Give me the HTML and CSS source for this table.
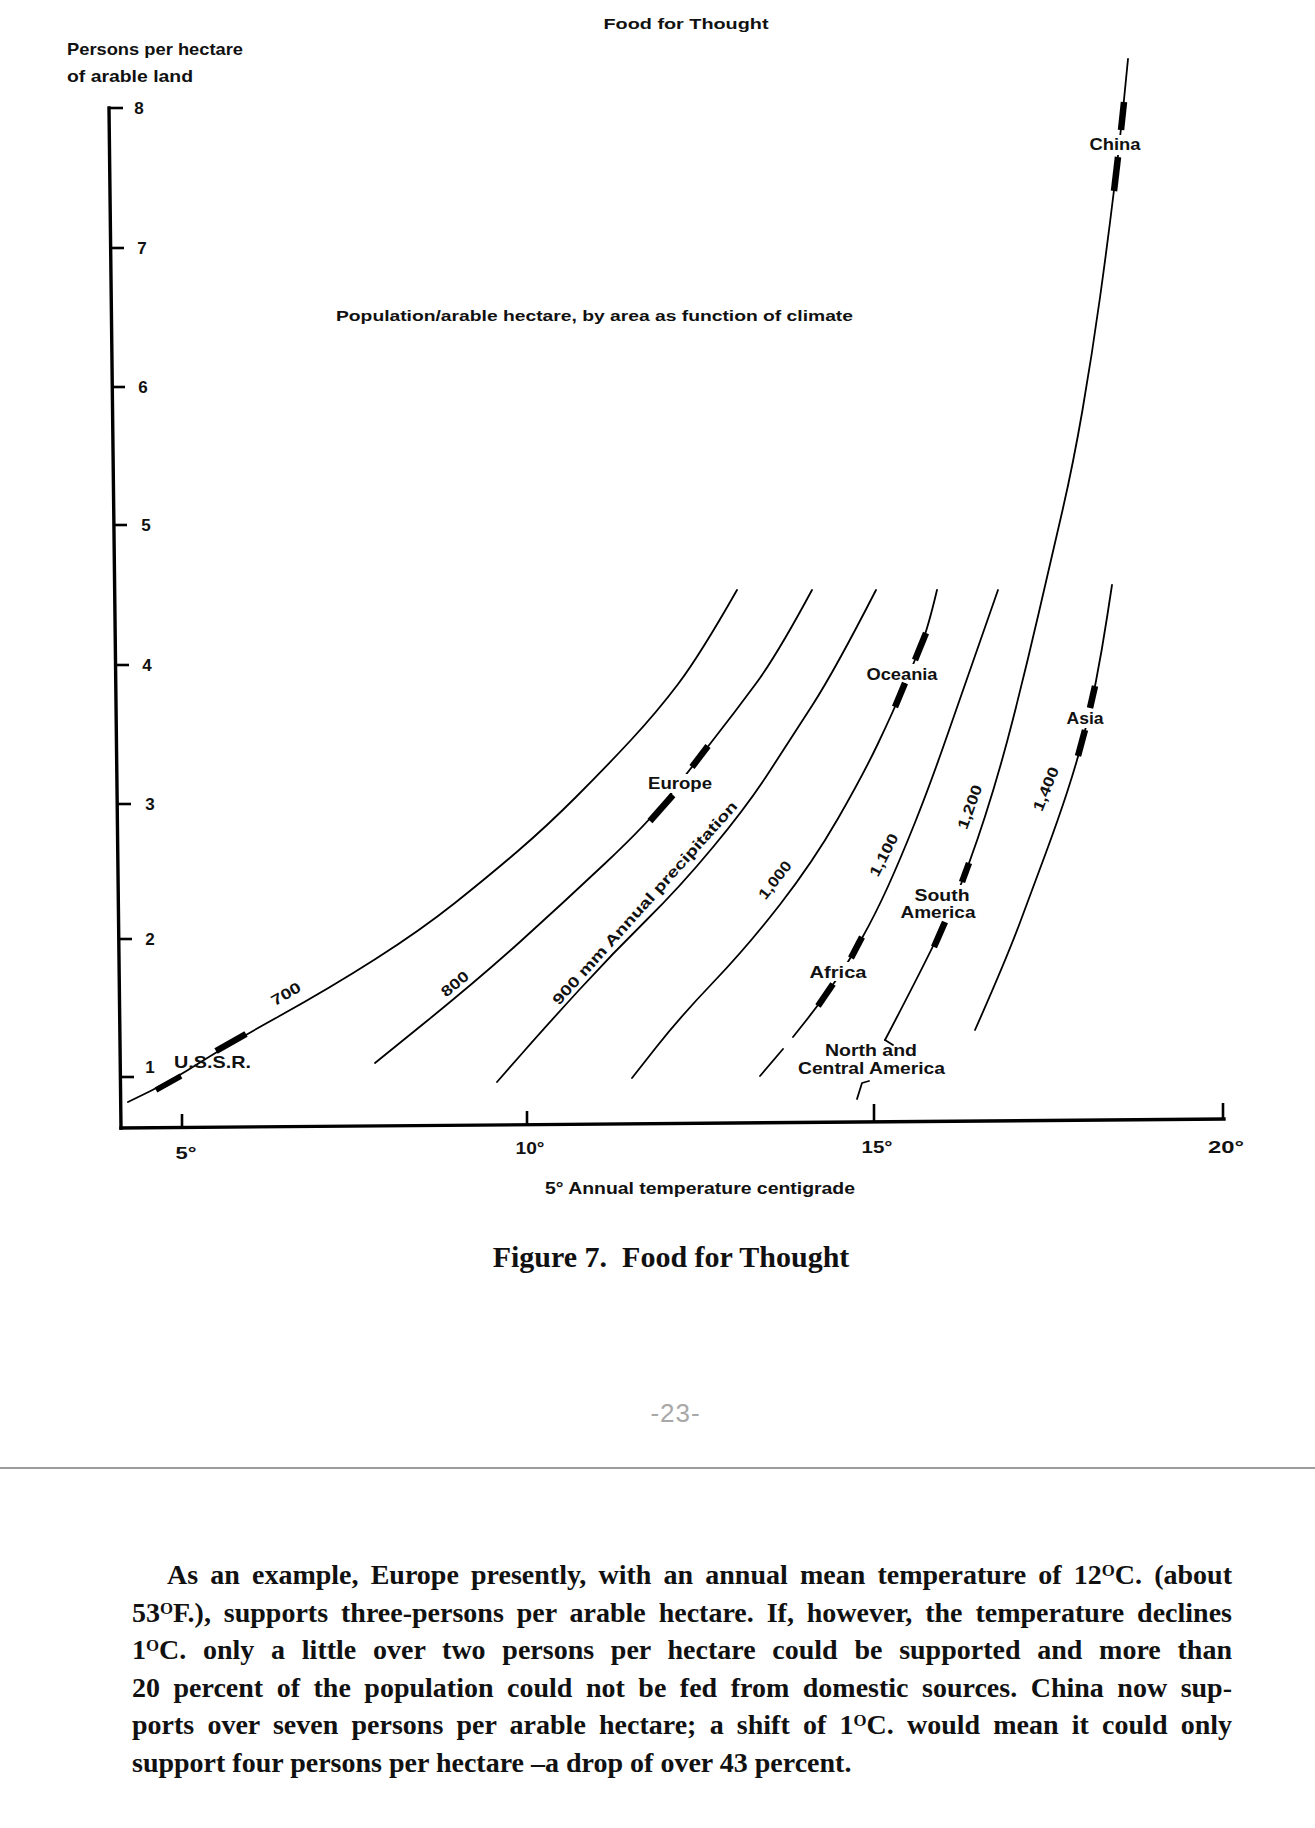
FILE: index.html
```html
<!DOCTYPE html>
<html lang="en">
<head>
<meta charset="utf-8">
<title>Figure 7. Food for Thought</title>
<link rel="stylesheet" href="styles.css">
</head>
<body>
<main class="page">
  <svg class="chart" xmlns="http://www.w3.org/2000/svg" width="1315" height="1239" viewBox="0 0 1315 1239">
    <!-- axes -->
    <line class="axis" x1="109" y1="108" x2="121" y2="1128"/>
    <line class="axis" x1="121" y1="1128" x2="1224" y2="1119"/>
    <line class="tick" x1="109" y1="108" x2="123" y2="108"/>
    <line class="tick" x1="110.5" y1="248" x2="124" y2="248"/>
    <line class="tick" x1="112" y1="387" x2="125" y2="387"/>
    <line class="tick" x1="113.5" y1="525" x2="127" y2="525"/>
    <line class="tick" x1="115.5" y1="665" x2="129" y2="665"/>
    <line class="tick" x1="117" y1="804" x2="131" y2="804"/>
    <line class="tick" x1="119" y1="939" x2="132" y2="939"/>
    <line class="tick" x1="120.5" y1="1077" x2="134" y2="1077"/>
    <line class="tick" x1="182" y1="1127" x2="182" y2="1114"/>
    <line class="tick" x1="527" y1="1124" x2="527" y2="1111"/>
    <line class="tick" x1="874" y1="1122" x2="874" y2="1104"/>
    <line class="tick" x1="1223" y1="1120" x2="1223" y2="1103"/>

    <!-- precipitation curves -->
    <path class="curve" d="M128,1102 L149.5,1091.5 Q171,1081 200,1062.5 Q229,1044 279.5,1016 Q330,988 375.5,959 Q421,930 455.5,902.5 Q490,875 518.5,850.5 Q547,826 576,797 Q605,768 631,740 Q657,712 678.5,683.5 Q700,655 737,590"/>
    <path class="curve" d="M375,1063 L427.5,1020.5 Q480,978 521.5,940.5 Q563,903 605.5,863 Q648,823 668,797.5 Q688,772 711.5,742 Q735,712 756,683.5 Q777,655 812,590"/>
    <path class="curve" d="M497,1082 L522,1053.5 Q547,1025 580,989 Q613,953 646.5,920 Q680,887 713.5,846.5 Q747,806 768.5,773 Q790,740 812.5,705 Q835,670 876,590"/>
    <path class="curve" d="M632,1078 L656,1047.5 Q680,1017 713.5,982 Q747,947 780,904.5 Q813,862 838,818.5 Q863,775 878,743.5 Q893,712 904,686 Q915,660 921.5,644 Q928,628 937,590"/>
    <path class="curve" d="M793,1037 L806.5,1020 Q820,1003 834,983 Q848,963 861.5,939 Q875,915 887.5,887.5 Q900,860 915,822.5 Q930,785 946.5,737.5 Q963,690 998,590"/>
    <path class="curve" d="M783,1049 L760,1076"/>
    <path class="curve" d="M1128,59 L1124,99.5 Q1120,140 1114,190 Q1108,240 1100,297.5 Q1092,355 1082.5,410 Q1073,465 1062,512.5 Q1051,560 1038.5,614 Q1026,668 1013,719 Q1000,770 985,816.5 Q970,863 955,899 Q940,935 885,1040"/>
    <path class="curve" d="M885,1040 L893,1045"/>
    <path class="curve" d="M1112,585 L1107,617.5 Q1102,650 1096,681 Q1090,712 1083,738.5 Q1076,765 1067,792.5 Q1058,820 1046,852.5 Q1034,885 1020,922.5 Q1006,960 975,1030"/>
    <path class="curve" d="M857,1099 L862,1083 L869,1081"/>

    <!-- label knock-outs -->
    <rect class="gap" x="645" y="774" width="70" height="19"/>
    <rect class="gap" x="864" y="664" width="77" height="19"/>
    <rect class="gap" x="1064" y="708" width="42" height="20"/>
    <rect class="gap" x="896" y="885" width="83" height="38"/>
    <rect class="gap" x="807" y="962" width="63" height="19"/>
    <rect class="gap" x="1087" y="135" width="57" height="20"/>

    <!-- region markers -->
    <line class="mark mark-sm" x1="156" y1="1090" x2="181" y2="1076"/>
    <line class="mark" x1="216" y1="1051" x2="246" y2="1034"/>
    <line class="mark" x1="650" y1="821" x2="673" y2="795"/>
    <line class="mark" x1="692" y1="767" x2="708" y2="746"/>
    <line class="mark" x1="895" y1="707" x2="905" y2="683"/>
    <line class="mark" x1="915" y1="660" x2="926" y2="633"/>
    <line class="mark" x1="818" y1="1006" x2="833" y2="984"/>
    <line class="mark" x1="851" y1="958" x2="862" y2="937"/>
    <line class="mark" x1="962" y1="882" x2="969" y2="863"/>
    <line class="mark" x1="934" y1="947" x2="945" y2="922"/>
    <line class="mark" x1="1090" y1="708" x2="1095" y2="686"/>
    <line class="mark" x1="1078" y1="756" x2="1085" y2="730"/>
    <line class="mark" x1="1121" y1="130" x2="1124" y2="102"/>
    <line class="mark" x1="1114" y1="191" x2="1118" y2="157"/>

    <!-- titles -->
    <text class="lbl" x="686" y="29" text-anchor="middle" textLength="165" lengthAdjust="spacingAndGlyphs">Food for Thought</text>
    <text class="lbl lbl-lg" x="67" y="55" textLength="176" lengthAdjust="spacingAndGlyphs">Persons per hectare</text>
    <text class="lbl lbl-lg" x="67" y="82" textLength="126" lengthAdjust="spacingAndGlyphs">of arable land</text>
    <text class="lbl" x="336" y="321" textLength="517" lengthAdjust="spacingAndGlyphs">Population/arable hectare, by area as function of climate</text>

    <!-- y axis values -->
    <text class="lbl num" x="139" y="114" text-anchor="middle">8</text>
    <text class="lbl num" x="142" y="254" text-anchor="middle">7</text>
    <text class="lbl num" x="143" y="393" text-anchor="middle">6</text>
    <text class="lbl num" x="146" y="531" text-anchor="middle">5</text>
    <text class="lbl num" x="147" y="671" text-anchor="middle">4</text>
    <text class="lbl num" x="150" y="810" text-anchor="middle">3</text>
    <text class="lbl num" x="150" y="945" text-anchor="middle">2</text>
    <text class="lbl num" x="150" y="1073" text-anchor="middle">1</text>

    <!-- x axis values -->
    <text class="lbl num" x="186" y="1159" text-anchor="middle" textLength="21" lengthAdjust="spacingAndGlyphs">5°</text>
    <text class="lbl num" x="530" y="1154" text-anchor="middle" textLength="29" lengthAdjust="spacingAndGlyphs">10°</text>
    <text class="lbl num" x="877" y="1153" text-anchor="middle" textLength="31" lengthAdjust="spacingAndGlyphs">15°</text>
    <text class="lbl num" x="1226" y="1153" text-anchor="middle" textLength="36" lengthAdjust="spacingAndGlyphs">20°</text>
    <text class="lbl lbl-md" x="545" y="1194" textLength="310" lengthAdjust="spacingAndGlyphs">5° Annual temperature centigrade</text>

    <!-- precipitation values -->
    <text class="lbl" x="286" y="999" text-anchor="middle" textLength="32" lengthAdjust="spacingAndGlyphs" transform="rotate(-30 286 994)">700</text>
    <text class="lbl" x="455" y="989" text-anchor="middle" textLength="31" lengthAdjust="spacingAndGlyphs" transform="rotate(-40 455 984)">800</text>
    <text class="lbl" x="645" y="908" text-anchor="middle" textLength="268" lengthAdjust="spacingAndGlyphs" transform="rotate(-48 645 903)">900 mm Annual precipitation</text>
    <text class="lbl" x="775" y="885" text-anchor="middle" textLength="44" lengthAdjust="spacingAndGlyphs" transform="rotate(-52 775 880)">1,000</text>
    <text class="lbl" x="884" y="860" text-anchor="middle" textLength="46" lengthAdjust="spacingAndGlyphs" transform="rotate(-63 884 855)">1,100</text>
    <text class="lbl" x="970" y="812" text-anchor="middle" textLength="46" lengthAdjust="spacingAndGlyphs" transform="rotate(-70 970 807)">1,200</text>
    <text class="lbl" x="1046" y="794" text-anchor="middle" textLength="46" lengthAdjust="spacingAndGlyphs" transform="rotate(-68 1046 789)">1,400</text>

    <!-- regions -->
    <text class="lbl lbl-md" x="174" y="1068" textLength="77" lengthAdjust="spacingAndGlyphs">U.S.S.R.</text>
    <text class="lbl lbl-md" x="680" y="789" text-anchor="middle" textLength="64" lengthAdjust="spacingAndGlyphs">Europe</text>
    <text class="lbl lbl-md" x="902" y="680" text-anchor="middle" textLength="71" lengthAdjust="spacingAndGlyphs">Oceania</text>
    <text class="lbl lbl-md" x="1085" y="724" text-anchor="middle" textLength="37" lengthAdjust="spacingAndGlyphs">Asia</text>
    <text class="lbl lbl-md" x="1115" y="150" text-anchor="middle" textLength="51" lengthAdjust="spacingAndGlyphs">China</text>
    <text class="lbl lbl-md" x="942" y="901" text-anchor="middle" textLength="55" lengthAdjust="spacingAndGlyphs">South</text>
    <text class="lbl lbl-md" x="938" y="918" text-anchor="middle" textLength="75" lengthAdjust="spacingAndGlyphs">America</text>
    <text class="lbl lbl-md" x="838" y="978" text-anchor="middle" textLength="57" lengthAdjust="spacingAndGlyphs">Africa</text>
    <text class="lbl lbl-md" x="825" y="1056" textLength="92" lengthAdjust="spacingAndGlyphs">North and</text>
    <text class="lbl lbl-md" x="798" y="1074" textLength="147" lengthAdjust="spacingAndGlyphs">Central America</text>
  </svg>

  <p class="caption">Figure 7.&nbsp; Food for Thought</p>
  <p class="folio">-23-</p>
  <div class="rule"></div>

  <div class="text">
    <div class="line line-first">As an example, Europe presently, with an annual mean temperature of 12<span class="sup">O</span>C. (about</div>
    <div class="line">53<span class="sup">O</span>F.), supports three-persons per arable hectare. If, however, the temperature declines</div>
    <div class="line">1<span class="sup">O</span>C. only a little over two persons per hectare could be supported and more than</div>
    <div class="line">20 percent of the population could not be fed from domestic sources. China now sup-</div>
    <div class="line">ports over seven persons per arable hectare; a shift of 1<span class="sup">O</span>C. would mean it could only</div>
    <div class="line line-last">support four persons per hectare –a drop of over 43 percent.</div>
  </div>
</main>
</body>
</html>
```

FILE: styles.css
```css
html, body {
  margin: 0;
  padding: 0;
  background: #ffffff;
}

.page {
  width: 1315px;
  min-height: 1828px;
  color: #111111;
}

.chart {
  display: block;
}

.axis {
  stroke: #000000;
  stroke-width: 3.4;
  stroke-linecap: square;
}

.tick {
  stroke: #000000;
  stroke-width: 2.6;
}

.curve {
  fill: none;
  stroke: #000000;
  stroke-width: 1.8;
  stroke-linecap: round;
  stroke-linejoin: round;
}

.gap {
  fill: #ffffff;
}

.mark {
  stroke: #000000;
  stroke-width: 6.5;
  stroke-linecap: butt;
}

.mark-sm {
  stroke-width: 5.5;
}

.lbl {
  font-family: "Liberation Sans", Arial, sans-serif;
  font-weight: 700;
  font-size: 15px;
  fill: #111111;
}

.lbl-lg {
  font-size: 17px;
}

.lbl-md {
  font-size: 17px;
}

.num {
  font-size: 17px;
}

.caption {
  margin: 0;
  padding-left: 27px;
  text-align: center;
  font-family: "Liberation Serif", "Times New Roman", serif;
  font-weight: 700;
  font-size: 30px;
  line-height: 36px;
}

.folio {
  margin: 123px 0 0;
  padding-left: 36px;
  text-align: center;
  font-family: "Liberation Sans", Arial, sans-serif;
  font-size: 26px;
  line-height: 30px;
  letter-spacing: 1px;
  color: #a8a8a8;
}

.rule {
  margin-top: 39px;
  border-top: 2px solid #9c9c9c;
}

.text {
  margin: 87px 0 0 132px;
  width: 1100px;
  font-family: "Liberation Serif", "Times New Roman", serif;
  font-weight: 700;
  font-size: 28px;
  line-height: 37.6px;
}

.line {
  text-align: justify;
  text-align-last: justify;
}

.line-first {
  text-indent: 35px;
}

.line-last {
  text-align: left;
  text-align-last: left;
}

.sup {
  font-size: 0.6em;
  vertical-align: 0.5em;
  line-height: 0;
}
```
